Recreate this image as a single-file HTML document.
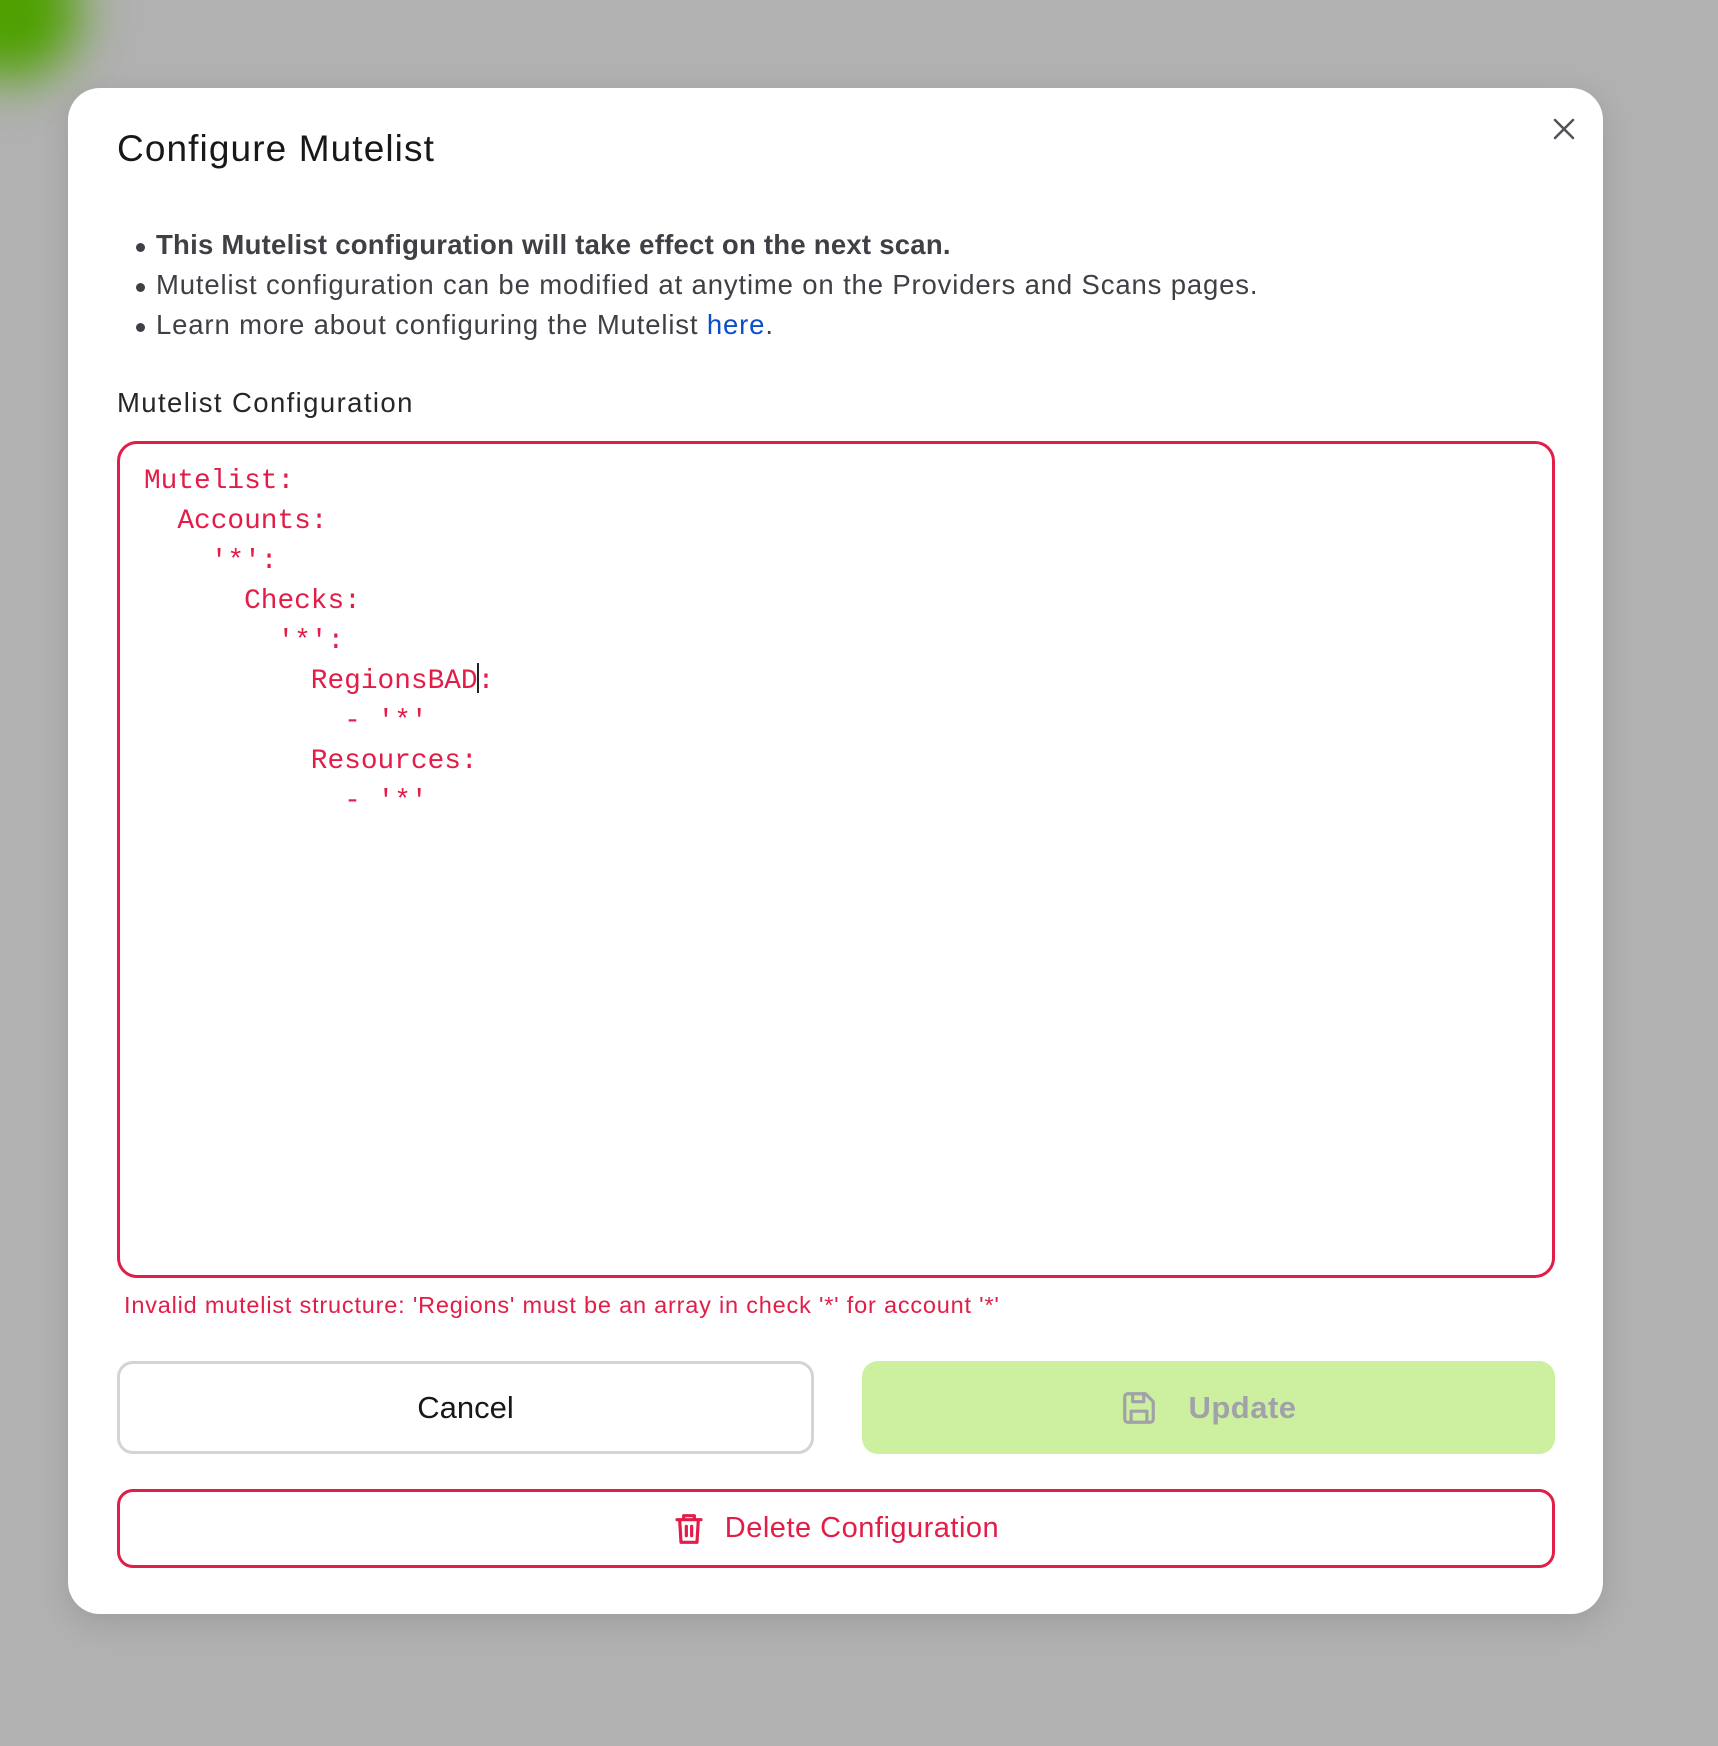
<!DOCTYPE html>
<html><head><meta charset="utf-8"><style>
*{box-sizing:border-box;margin:0;padding:0}
html,body{width:1718px;height:1746px;overflow:hidden}
body{background:#b1b1b1;font-family:"Liberation Sans",sans-serif;position:relative}
.blob{position:absolute;left:-60px;top:-60px;width:140px;height:140px;border-radius:50%;background:#4ea000;filter:blur(25px)}
.modal{position:absolute;left:68px;top:88px;width:1535px;height:1526px;background:#fff;border-radius:32px;box-shadow:0 8px 30px rgba(0,0,0,.12)}
.abs{position:absolute;white-space:nowrap}
h1{position:absolute;left:49px;top:40px;font-size:37px;font-weight:normal;color:#18181b;letter-spacing:1.1px}
.close{position:absolute;left:1485px;top:30px}
.b{left:88px;font-size:27.5px;color:#3f3f46;letter-spacing:0.85px}
.dot{position:absolute;left:-20px;top:14px;width:9px;height:9px;border-radius:50%;background:#3f3f46}
.ta{position:absolute;left:49px;top:353px;width:1438px;height:837px;border:3px solid #e11d48;border-radius:20px}
pre{position:absolute;left:24px;top:18px;font-family:"Liberation Mono",monospace;font-size:27.8px;line-height:40px;color:#e11d48}
.cur{display:inline-block;width:2px;height:30px;background:#222;vertical-align:-5px;margin:0 -1px}
.btn{position:absolute;border-radius:16px;display:flex;align-items:center;justify-content:center;font-size:31px}
</style></head><body>
<div class="blob"></div>
<div class="modal">
<h1>Configure Mutelist</h1>
<svg class="close" width="22" height="22" viewBox="0 0 22 22"><path d="M2 2L20 20M20 2L2 20" stroke="#52525b" stroke-width="2.5" stroke-linecap="round"/></svg>
<div class="abs b" style="top:141px;font-weight:bold;letter-spacing:0.25px"><span class="dot"></span>This Mutelist configuration will take effect on the next scan.</div>
<div class="abs b" style="top:181px"><span class="dot"></span>Mutelist configuration can be modified at anytime on the Providers and Scans pages.</div>
<div class="abs b" style="top:221px"><span class="dot"></span>Learn more about configuring the Mutelist <span style="color:#0a4fc9">here</span>.</div>
<div class="abs" style="left:49px;top:299px;font-size:27.5px;color:#27272a;letter-spacing:1.4px">Mutelist Configuration</div>
<div class="ta"><pre>Mutelist:
  Accounts:
    '*':
      Checks:
        '*':
          RegionsBAD<span class="cur"></span>:
            - '*'
          Resources:
            - '*'</pre></div>
<div class="abs" style="left:56px;top:1204px;font-size:23.5px;color:#e11d48;letter-spacing:0.8px">Invalid mutelist structure: 'Regions' must be an array in check '*' for account '*'</div>
<div class="btn" style="left:49px;top:1273px;width:697px;height:93px;border:3px solid #d4d4d8;color:#18181b">Cancel</div>
<div class="btn" style="left:794px;top:1273px;width:693px;height:93px;background:#cdf0a0;color:#a1a1aa;font-weight:bold;letter-spacing:0.5px">
<svg width="38" height="38" viewBox="0 0 24 24" style="margin-right:30px" fill="none" stroke="#a1a1aa" stroke-width="2" stroke-linejoin="round"><path d="M5 3h11l5 5v11a2 2 0 0 1-2 2H5a2 2 0 0 1-2-2V5a2 2 0 0 1 2-2z"/><path d="M8 3v5h7V3"/><path d="M7 21v-7h10v7"/></svg>Update</div>
<div class="btn" style="left:49px;top:1401px;width:1438px;height:79px;border:3px solid #e11d48;color:#e11d48;font-size:29px;letter-spacing:0.5px">
<svg width="32" height="36" viewBox="0 0 24 26" style="margin-right:20px" fill="none" stroke="#e11d48" stroke-width="2.4" stroke-linecap="round" stroke-linejoin="round"><path d="M3 6h18M8 6V3h8v3M5 6l1 17h12l1-17M10 11v7M14 11v7"/></svg>Delete Configuration</div>
</div>
</body></html>
